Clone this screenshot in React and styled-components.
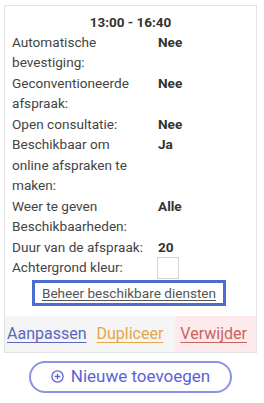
import React from "react";
import styled, { createGlobalStyle } from "styled-components";

const Global = createGlobalStyle`
  html, body { margin: 0; padding: 0; background: #fff; }
  body { font-family: Roboto, "Noto Sans", Arial, sans-serif; }
`;

const Page = styled.div`
  width: 253px;
  padding: 5px 0 0 4px;
  display: flex;
  flex-direction: column;
  align-items: center;
`;

const Card = styled.div`
  width: 253px;
  box-sizing: border-box;
  border: 1px solid #e2e2e2;
  background: #fff;
  display: flex;
  flex-direction: column;
`;

const Body = styled.div`
  padding: 6px 7px 0 7px;
  display: flex;
  flex-direction: column;
`;

const Title = styled.div`
  text-align: center;
  font-weight: 700;
  font-size: 13.5px;
  line-height: 20px;
  color: #333;
`;

const Grid = styled.div`
  display: grid;
  grid-template-columns: 146px 1fr;
  font-size: 13.6px;
  line-height: 20.45px;
  color: #444;
`;

const Label = styled.div`
  padding-right: 9px;
`;

const Value = styled.div`
  font-weight: 700;
  color: #333;
`;

const Swatch = styled.div`
  width: 20px;
  height: 20px;
  border: 1px solid #d4d4d4;
  margin-left: -1px;
`;

const LinkRow = styled.div`
  display: flex;
  justify-content: center;
  margin-top: 1px;
`;

const LinkBox = styled.a`
  display: block;
  width: 194px;
  height: 26px;
  box-sizing: border-box;
  border: 3px solid #4c6dcf;
  text-align: center;
  font-size: 13.6px;
  line-height: 20px;
  color: #555;
  text-decoration: underline;
  text-underline-offset: 2px;
  margin-left: -3px;
`;

const Footer = styled.div`
  margin-top: 10px;
  height: 36px;
  background: #f5f5f6;
  display: flex;
  align-items: center;
`;

const Action = styled.a`
  font-size: 16px;
  line-height: 36px;
  padding: 0 ${(p) => p.$pr ?? 5}px 0 ${(p) => p.$pl ?? 5}px;
  margin-left: ${(p) => p.$ml || 0}px;
  color: ${(p) => p.$color};
  background: ${(p) => p.$bg || "transparent"};
  text-decoration: underline;
  text-underline-offset: 3px;
`;

const AddButton = styled.button`
  margin-top: 8px;
  width: 203px;
  height: 32px;
  border: 2px solid #8e92e2;
  border-radius: 16px;
  background: #fff;
  color: #5b62d4;
  font-family: Roboto, "Noto Sans", Arial, sans-serif;
  font-size: 17px;
  display: flex;
  align-items: center;
  justify-content: center;
  gap: 7px;
  padding: 0 0 1px 0;
`;

const rows = [
  ["Automatische bevestiging:", "Nee"],
  ["Geconventioneerde afspraak:", "Nee"],
  ["Open consultatie:", "Nee"],
  ["Beschikbaar om online afspraken te maken:", "Ja"],
  ["Weer te geven Beschikbaarheden:", "Alle"],
  ["Duur van de afspraak:", "20"],
];

export default function App() {
  return (
    <>
      <Global />
      <Page>
        <Card>
          <Body>
            <Title>13:00 - 16:40</Title>
            <Grid>
              {rows.map(([l, v]) => (
                <React.Fragment key={l}>
                  <Label>{l}</Label>
                  <Value>{v}</Value>
                </React.Fragment>
              ))}
              <Label>Achtergrond kleur:</Label>
              <Value>
                <Swatch />
              </Value>
            </Grid>
            <LinkRow>
              <LinkBox>Beheer beschikbare diensten</LinkBox>
            </LinkRow>
          </Body>
          <Footer>
            <Action $color="#5a68c0" $pl={2}>Aanpassen</Action>
            <Action $color="#e6a548">Dupliceer</Action>
            <Action $color="#c9625c" $bg="#fdeaec" $ml={7} $pr={9}>Verwijder</Action>
          </Footer>
        </Card>
        <AddButton>
          <svg width="13" height="13" viewBox="0 0 14 14" fill="none" stroke="#5b62d4" strokeWidth="1.4">
            <circle cx="7" cy="7" r="6" />
            <path d="M7 4v6M4 7h6" />
          </svg>
          Nieuwe toevoegen
        </AddButton>
      </Page>
    </>
  );
}
